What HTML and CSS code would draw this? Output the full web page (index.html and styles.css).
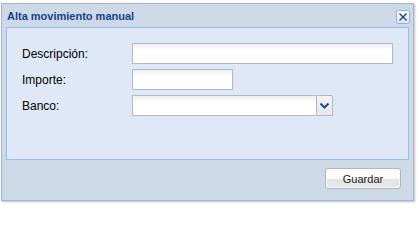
FILE: index.html
```html
<!DOCTYPE html>
<html lang="es">
<head>
<meta charset="utf-8">
<title>Alta movimiento manual</title>
<link rel="stylesheet" href="styles.css">
</head>
<body>
<div class="window">
  <div class="header">
    <span class="title">Alta movimiento manual</span>
    <span class="close">
      <svg width="14" height="14" viewBox="0 0 14 14">
        <defs>
          <linearGradient id="cg" x1="0" y1="0" x2="0" y2="1">
            <stop offset="0" stop-color="#ffffff"/>
            <stop offset="1" stop-color="#dce6f4"/>
          </linearGradient>
        </defs>
        <rect x="0.5" y="0.5" width="13" height="13" rx="2" fill="url(#cg)" stroke="#8fb0dc"/>
        <path d="M3.5 3.5 L10.5 10.5 M10.5 3.5 L3.5 10.5" stroke="#1f3f7a" stroke-width="1.4"/>
      </svg>
    </span>
  </div>
  <div class="panel">
    <div class="row">
      <label class="label">Descripción:</label>
      <div class="field w-full"></div>
    </div>
    <div class="row">
      <label class="label">Importe:</label>
      <div class="field w-short"></div>
    </div>
    <div class="row">
      <label class="label">Banco:</label>
      <div class="combo">
        <div class="field w-combo"></div>
        <div class="trigger">
          <svg width="9" height="6" viewBox="0 0 9 6"><path d="M0.5 0.5 L4.5 4.5 L8.5 0.5" fill="none" stroke="#1f4a8f" stroke-width="2"/></svg>
        </div>
      </div>
    </div>
  </div>
  <div class="footer">
    <button class="btn">Guardar</button>
  </div>
</div>
</body>
</html>
```

FILE: styles.css
```css
html, body {
  margin: 0;
  padding: 0;
  background: #ffffff;
}
body {
  font-family: "Liberation Sans", Arial, sans-serif;
  width: 417px;
  height: 204px;
  overflow: hidden;
}
.window {
  margin: 3px 0 0 1px;
  width: 413px;
  height: 198px;
  box-sizing: border-box;
  border: 1px solid #a3b5cf;
  background: #ced9e7;
  padding: 0 4px;
  box-shadow: 1px 1px 2px rgba(0,0,0,0.25);
  display: flex;
  flex-direction: column;
}
.header {
  height: 23px;
  display: flex;
  align-items: center;
  justify-content: space-between;
}
.title {
  font-weight: bold;
  font-size: 11px;
  color: #15428b;
  margin-left: 1px;
  margin-top: 1px;
}
.close {
  display: block;
  width: 14px;
  height: 14px;
  margin-right: -1px;
  margin-top: 2px;
}
.close svg { display: block; }
.panel {
  height: 133px;
  box-sizing: border-box;
  border: 1px solid #99bbe8;
  background: #dfe8f6;
  padding: 15px 15px 0 15px;
  display: flex;
  flex-direction: column;
  gap: 5px;
}
.row {
  display: flex;
  align-items: center;
  height: 21px;
}
.label {
  width: 110px;
  font-size: 12px;
  color: #000;
}
.field {
  height: 21px;
  box-sizing: border-box;
  border: 1px solid #b5b8c8;
  background: linear-gradient(#eceeef 0, #ffffff 6px, #ffffff 100%);
}
.w-full { width: 261px; }
.w-short { width: 101px; }
.combo {
  display: flex;
}
.w-combo { width: 184px; border-right: none; }
.trigger {
  width: 17px;
  height: 21px;
  box-sizing: border-box;
  border: 1px solid #b5b8c8;
  border-radius: 0 2px 0 0;
  background: linear-gradient(#f4f4f4, #e8e8ea);
  display: flex;
  align-items: center;
  justify-content: center;
}
.trigger svg { display: block; }
.footer {
  flex: 1;
  display: flex;
  justify-content: flex-end;
  align-items: flex-start;
  padding-top: 8px;
  padding-right: 8px;
}
.btn {
  width: 76px;
  height: 21px;
  margin: 0;
  padding: 0;
  border: 1px solid #b5b5b5;
  border-radius: 3px;
  background: linear-gradient(#ffffff 0, #fbfbfb 50%, #e3e3e3 50%, #e8e8e8 100%);
  font-family: "Liberation Sans", Arial, sans-serif;
  font-size: 11px;
  color: #222;
  box-shadow: inset 0 0 0 1px rgba(255,255,255,0.7);
}
```
